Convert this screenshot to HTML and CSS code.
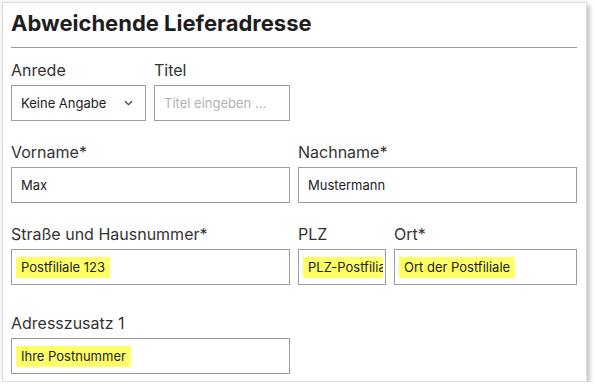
FILE: index.html
```html
<!DOCTYPE html>
<html lang="de">
<head>
    <meta charset="UTF-8">
    <meta name="viewport" content="width=device-width, initial-scale=1.0">
    <title>Abweichende Lieferadresse</title>
    <link rel="stylesheet" href="styles.css">
</head>
<body>
    <div class="card">
        <h2 class="title">Abweichende Lieferadresse</h2>
        <hr class="rule">

        <div class="row">
            <div class="pair">
                <div class="field">
                    <label>Anrede</label>
                    <div class="box select">
                        <div class="val"><span>Keine Angabe</span></div>
                        <svg class="chevron" width="9" height="6" viewBox="0 0 9 6">
                            <path d="M1 1.2 L4.5 4.6 L8 1.2" fill="none" stroke="#444" stroke-width="1.3"/>
                        </svg>
                    </div>
                </div>
                <div class="field">
                    <label>Titel</label>
                    <div class="box">
                        <div class="val"><span class="placeholder">Titel eingeben ...</span></div>
                    </div>
                </div>
            </div>
            <div></div>
        </div>

        <div class="row">
            <div class="field">
                <label>Vorname*</label>
                <div class="box"><div class="val"><span>Max</span></div></div>
            </div>
            <div class="field">
                <label>Nachname*</label>
                <div class="box"><div class="val"><span>Mustermann</span></div></div>
            </div>
        </div>

        <div class="row">
            <div class="field">
                <label>Straße und Hausnummer*</label>
                <div class="box"><div class="val"><span class="mark">Postfiliale 123</span></div></div>
            </div>
            <div class="pair pair-zip">
                <div class="field">
                    <label>PLZ</label>
                    <div class="box"><div class="val"><span class="mark">PLZ-Postfiliale</span></div></div>
                </div>
                <div class="field">
                    <label>Ort*</label>
                    <div class="box"><div class="val"><span class="mark">Ort der Postfiliale</span></div></div>
                </div>
            </div>
        </div>

        <div class="row row-last">
            <div class="field">
                <label>Adresszusatz 1</label>
                <div class="box"><div class="val"><span class="mark">Ihre Postnummer</span></div></div>
            </div>
            <div></div>
        </div>
    </div>
</body>
</html>
```

FILE: styles.css
```css
body {
    margin: 0;
    background: #fff;
    font-family: Inter, "Noto Sans", Arial, sans-serif;
    color: #2b2b2b;
}
.card {
    margin: 2px 0 0 2px;
    width: 585px;
    height: 380px;
    box-sizing: border-box;
    padding: 5px 9px 0 8px;
    background: #fff;
    border: 1px solid #dcdcdc;
    box-shadow: -1px -1px 2px rgba(0, 0, 0, 0.08), 3px 3px 4px rgba(0, 0, 0, 0.22);
}
.title {
    margin: 0;
    font-size: 22px;
    line-height: 30px;
    font-weight: 700;
    color: #1e1e1e;
}
.rule {
    margin: 9px 0 12px 0;
    border: none;
    border-top: 1px solid #9a9a9a;
    height: 0;
}
.row {
    display: grid;
    grid-template-columns: 1fr 1fr;
    gap: 8px;
    margin-bottom: 21px;
}
.row-last {
    margin-top: 28px;
}
.pair {
    display: grid;
    grid-template-columns: 135px 1fr;
    gap: 8px;
}
.pair-zip {
    grid-template-columns: 88px 1fr;
}
label {
    display: block;
    font-size: 16px;
    line-height: 20px;
    margin-bottom: 5px;
    color: #333;
}
.box {
    height: 36px;
    box-sizing: border-box;
    border: 1px solid #9d9d9d;
    display: flex;
    align-items: center;
    padding: 0 2px 0 4px;
    font-size: 13px;
    color: #222;
}
.val {
    flex: 1;
    min-width: 0;
    overflow: hidden;
    white-space: nowrap;
}
.val span {
    display: inline-block;
    padding: 0 5px;
    line-height: 21px;
}
.placeholder {
    color: #b3b3b3;
}
.mark {
    background: #ffff66;
}
.select {
    padding-right: 12px;
}
.chevron {
    flex: none;
}
```
